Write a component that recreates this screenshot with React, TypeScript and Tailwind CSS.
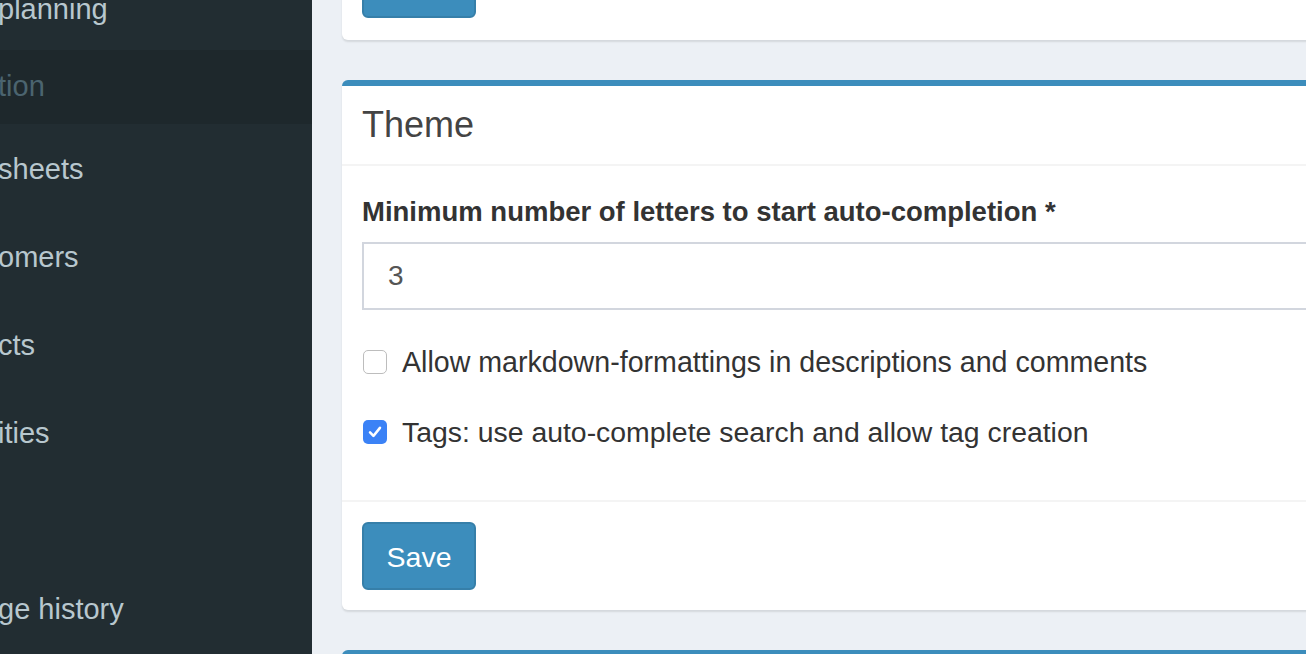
import React from "react";

const navItems: { text: string; active?: boolean; h: string }[] = [
  { text: "planning", h: "h-[88px]" },
  { text: "tion", active: true, h: "h-[74px]" },
  { text: "sheets", h: "h-[88px]" },
  { text: "omers", h: "h-[88px]" },
  { text: "cts", h: "h-[88px]" },
  { text: "ities", h: "h-[88px]" },
  { text: "", h: "h-[88px]" },
  { text: "ge history", h: "h-[88px]" },
];

function Checkbox({ checked }: { checked: boolean }) {
  if (checked) {
    return (
      <span className="flex h-[24px] w-[24px] shrink-0 items-center justify-center rounded-[5px] bg-[#3b82f6]">
        <svg width="18" height="18" viewBox="0 0 16 16" fill="none">
          <path d="M3.6 8.4 L6.6 11.5 L12.4 4.3" stroke="white" strokeWidth="2.3" strokeLinecap="round" strokeLinejoin="round" />
        </svg>
      </span>
    );
  }
  return <span className="block h-[24px] w-[24px] shrink-0 rounded-[5px] border-[1.5px] border-[#bdbdbd] bg-white" />;
}

export default function App() {
  return (
    <div
      className="flex h-[654px] w-[1306px] overflow-hidden bg-[#ecf0f5]"
      style={{ fontFamily: '"Liberation Sans", Arial, sans-serif' }}
    >
      {/* Sidebar */}
      <aside className="w-[312px] shrink-0 overflow-hidden bg-[#222d32]">
        <ul className="-mt-[38px]">
          {navItems.map((it, i) => (
            <li
              key={i}
              className={`flex ${it.h} items-center whitespace-nowrap text-[29px] ${
                it.active ? "bg-[#1e282c] text-[#4b646f]" : "text-[#b8c7ce]"
              } ${i === 0 ? "pt-[8px]" : i === 1 ? "pt-[0px]" : "pt-[4px]"}`}
            >
              <span className="-ml-[2px]">{it.text}</span>
            </li>
          ))}
        </ul>
      </aside>

      {/* Content */}
      <main className="flex-1 overflow-hidden pl-[30px]">
        {/* previous box (cut) */}
        <div className="-mt-[40px] w-[1100px] rounded-b-[6px] bg-white px-[20px] pb-[22px] shadow-[0_2px_2px_rgba(0,0,0,0.1)]">
          <div className="h-[58px] w-[114px] rounded-[6px] border-2 border-[#367fa9] bg-[#3c8dbc]" />
        </div>

        {/* Theme box */}
        <div className="mt-[40px] w-[1100px] rounded-[6px] border-t-[6px] border-[#3c8dbc] bg-white shadow-[0_2px_2px_rgba(0,0,0,0.1)]">
          <div className="flex h-[80px] items-center border-b-2 border-[#f4f4f4] px-[20px]">
            <h3 className="text-[36px] leading-none text-[#444444]">Theme</h3>
          </div>
          <div className="px-[20px] pt-[26px] pb-[48px] text-[#333333]">
            <label className="block text-[27.5px] font-bold leading-[40px]">
              Minimum number of letters to start auto-completion *
            </label>
            <div className="mt-[10px] flex h-[68px] items-center border-2 border-[#d2d6de] pl-[24px] text-[28px] text-[#555555]">
              3
            </div>
            <div className="mt-[32px] flex items-center gap-[15px] pl-[1px]">
              <Checkbox checked={false} />
              <span className="text-[28.6px] leading-[40px]">Allow markdown-formattings in descriptions and comments</span>
            </div>
            <div className="mt-[30px] flex items-center gap-[15px] pl-[1px]">
              <Checkbox checked={true} />
              <span className="text-[28.4px] leading-[40px]">Tags: use auto-complete search and allow tag creation</span>
            </div>
          </div>
          <div className="border-t-2 border-[#f4f4f4] px-[20px] pt-[20px] pb-[20px]">
            <button className="flex h-[68px] w-[114px] items-center justify-center rounded-[6px] border-2 border-[#367fa9] bg-[#3c8dbc] pt-[3px] text-[28.5px] text-white">
              Save
            </button>
          </div>
        </div>

        {/* next box */}
        <div className="mt-[40px] h-[40px] w-[1100px] rounded-t-[6px] border-t-[6px] border-[#3c8dbc] bg-white" />
      </main>
    </div>
  );
}
